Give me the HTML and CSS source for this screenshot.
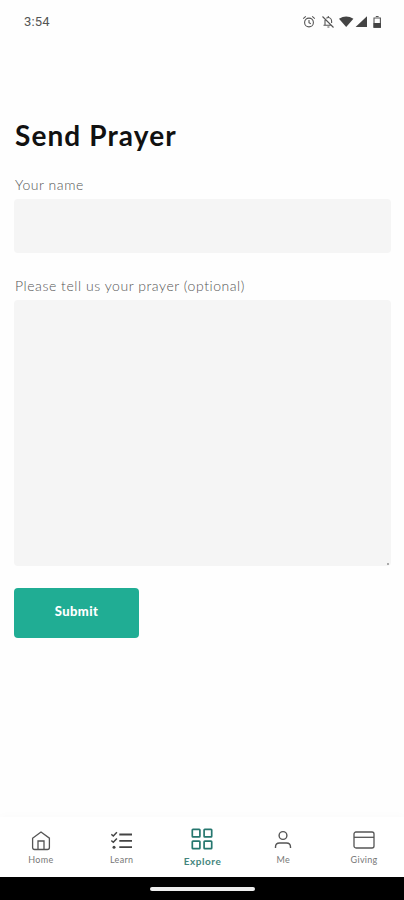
FILE: index.html
```
<!DOCTYPE html>
<html lang="en">
<head>
<meta charset="utf-8">
<meta name="viewport" content="width=device-width">
<title>Send Prayer</title>
<link rel="stylesheet" href="styles.css">
</head>
<body>
<div class="screen">
  <header class="status">
    <span class="clock">3:54</span>
    <svg class="status-icons" width="82" height="16" viewBox="0 0 82 16" fill="none" stroke="#555" stroke-width="1.1">
      <circle cx="7" cy="8.5" r="4.4"/><path d="M7 6v2.800l1.800 1M1.200 4.600l2.600-2.300M12.800 4.600l-2.600-2.300"/>
      <path d="M20.500 2.500l11 11M23 6v5.200h6.500M24.400 4.200c2-1.500 5.200-.3 5.200 2.800v2M25.400 13h2M26.300 2v1.500M21.500 11.300h2"/>
      <path d="M37 4.800q7.200-4.600 14.400 0L44.200 13z" fill="#444" stroke="none"/>
      <path d="M65 2.300V13H53.600z" fill="#444" stroke="none"/>
      <path d="M72 4h6.400v9.300H72zM73.800 2.500h2.800"/><path d="M71.500 9h7.400v4.800h-7.400z" fill="#444" stroke="none"/>
    </svg>
  </header>
  <main class="content">
    <h1 class="title">Send Prayer</h1>
    <form class="form">
      <label class="label name-label" for="name">Your name</label>
      <input class="field" id="name" type="text">
      <label class="label prayer-label" for="prayer">Please tell us your prayer (optional)</label>
      <div class="area-wrap">
        <textarea class="field area" id="prayer"></textarea>
        <span class="grip"></span>
      </div>
      <button class="submit" type="button">Submit</button>
    </form>
  </main>
  <nav class="tabs">
    <a class="tab">
      <svg width="22" height="22" viewBox="0 0 22 22" fill="none" stroke="#555" stroke-width="1.300"><path d="M2.600 8.200L11 2l8.400 6.200v9.300q0 2-2 2H4.600q-2 0-2-2zM8 19.500v-8.500h6v8.500"/></svg>
      <span class="tab-label">Home</span>
    </a>
    <a class="tab">
      <svg width="22" height="22" viewBox="0 0 22 22" fill="none" stroke="#444" stroke-width="1.800"><path d="M8.300 4.500H21M8.300 10.800H21M8.300 17.200H21"/><path d="M.3 4.300l2 1.700L5.900 2.300M.3 10.600l2 1.700 3.600-3.700" stroke-width="1.500"/><circle cx="3" cy="17.200" r="1.500" fill="#444" stroke="none"/></svg>
      <span class="tab-label">Learn</span>
    </a>
    <a class="tab active">
      <svg width="22" height="22" viewBox="0 0 22 22" fill="none" stroke="#26776f" stroke-width="1.700"><rect x="1.300" y="1.300" width="7.600" height="7.600" rx=".7"/><rect x="13.100" y="1.300" width="7.600" height="7.600" rx=".7"/><rect x="1.300" y="13.100" width="7.600" height="7.600" rx=".7"/><rect x="13.100" y="13.100" width="7.600" height="7.600" rx=".7"/></svg>
      <span class="tab-label">Explore</span>
    </a>
    <a class="tab">
      <svg width="22" height="22" viewBox="0 0 22 22" fill="none" stroke="#555" stroke-width="1.400"><circle cx="11" cy="5.500" r="3.900"/><path d="M3.500 18v-1q0-4 4-4h7q4 0 4 4v1"/></svg>
      <span class="tab-label">Me</span>
    </a>
    <a class="tab">
      <svg width="22" height="22" viewBox="0 0 22 22" fill="none" stroke="#555" stroke-width="1.300"><rect x="1" y="2" width="20" height="16" rx="2"/><path d="M1 7.300h20"/></svg>
      <span class="tab-label">Giving</span>
    </a>
  </nav>
  <footer class="system"><span class="handle"></span></footer>
</div>
</body>
</html>
```
FILE: styles.css
```
body {
  margin: 0;
  background: #fefefe;
  font-family: Lato, "Liberation Sans", sans-serif;
  font-variant-ligatures: none;
}
.screen {
  display: flex;
  flex-direction: column;
  height: 900px;
  overflow: hidden;
}
.status {
  display: flex;
  justify-content: space-between;
  align-items: center;
  height: 43px;
  padding: 0 20px 0 24px;
}
.clock {
  padding-top: 1px;
  font: 13px/16px Roboto, sans-serif;
  color: #555;
  letter-spacing: .2px;
}
.content {
  flex: 1;
  padding: 74px 13px 0 14px;
}
.title {
  margin: 0 0 0 1px;
  font-size: 28px;
  line-height: 36px;
  font-weight: 700;
  letter-spacing: 1.100px;
  color: #111;
}
.form {
  display: flex;
  flex-direction: column;
  align-items: flex-start;
}
.label {
  font-size: 14px;
  line-height: 20px;
  font-weight: 300;
  letter-spacing: .55px;
  color: #555;
  white-space: nowrap;
}
.name-label {
  margin: 22px 0 4px 1px;
}
.prayer-label {
  margin: 23px 0 4px 1px;
}
.field {
  display: block;
  box-sizing: border-box;
  width: 100%;
  height: 54px;
  border: 0;
  border-radius: 4px;
  background: #f5f5f5;
  resize: none;
  outline: 0;
}
.area-wrap {
  position: relative;
  width: 100%;
}
.area {
  height: 266px;
}
.grip {
  position: absolute;
  right: 2px;
  bottom: 1px;
  width: 2px;
  height: 2px;
  background: #aaa;
}
.submit {
  width: 125px;
  height: 50px;
  margin-top: 22px;
  padding: 0 0 4px;
  border: 0;
  border-radius: 4px;
  background: #20ad94;
  color: #fff;
  font: 900 13px/18px Lato, sans-serif;
  letter-spacing: .4px;
}
.tabs {
  display: flex;
  box-sizing: border-box;
  height: 60px;
  padding-top: 13px;
  background: #fff;
  box-shadow: 0 -2px 8px rgba(0, 0, 0, .015);
}
.tab {
  flex: 1;
  display: flex;
  flex-direction: column;
  align-items: center;
  padding-left: 1px;
}
.tab-label {
  margin-top: 2px;
  font-size: 9px;
  line-height: 12px;
  color: #777;
  letter-spacing: .3px;
}
.active svg {
  margin-top: -2px;
}
.active .tab-label {
  margin-top: 5px;
  font-size: 10px;
  font-weight: 700;
  letter-spacing: .55px;
  color: #43857d;
}
.system {
  display: flex;
  justify-content: center;
  height: 23px;
  background: #000;
}
.handle {
  width: 105px;
  height: 4px;
  margin-top: 10px;
  border-radius: 2px;
  background: #eee;
}
```
